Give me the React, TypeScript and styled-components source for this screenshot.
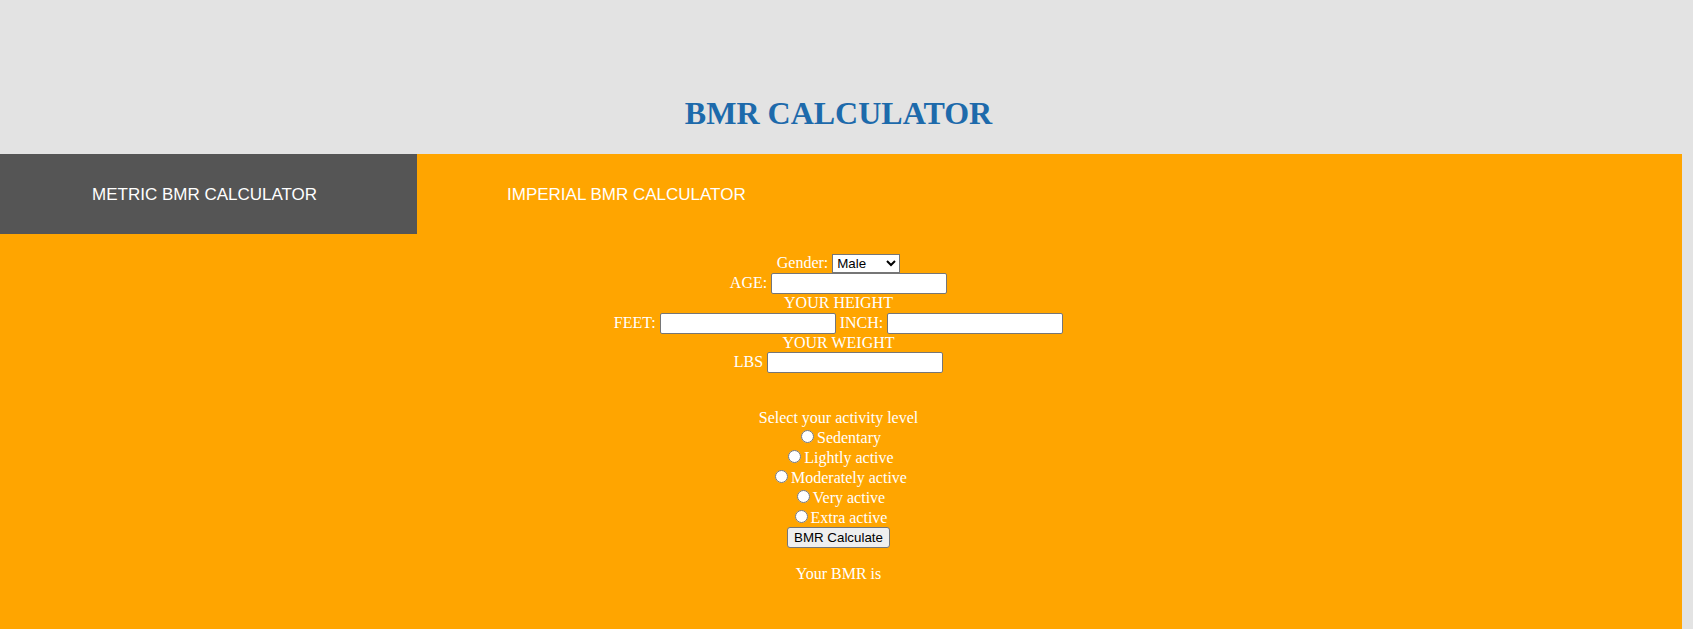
import React from "react";
import styled, { createGlobalStyle } from "styled-components";

const GlobalStyle = createGlobalStyle`
  html, body {
    margin: 0;
    padding: 0;
    background: #e3e3e3;
  }
  body {
    font-family: "Liberation Serif", "Times New Roman", serif;
    font-size: 16px;
  }
`;

const Header = styled.header`
  padding: 95px 16px 22px 0;
  text-align: center;
`;

const Title = styled.h1`
  margin: 0;
  font-family: "Liberation Serif", "Times New Roman", serif;
  font-size: 32px;
  line-height: 37px;
  font-weight: bold;
  color: #1d6aab;
`;

const Panel = styled.main`
  width: 1682px;
  min-height: 475px;
  background: #ffa500;
`;

const TabBar = styled.nav`
  display: flex;
`;

const Tab = styled.div<{ $active?: boolean; $indent: number }>`
  width: 417px;
  height: 80px;
  box-sizing: border-box;
  padding: 31px 0 0 ${(p) => p.$indent}px;
  background: ${(p) => (p.$active ? "#555555" : "transparent")};
  color: #ffffff;
  font-family: "Liberation Sans", Arial, sans-serif;
  font-size: 17px;
  line-height: 20px;
  cursor: pointer;
`;

const Form = styled.form`
  padding: 19.5px 5px 40px 0;
  text-align: center;
  color: #ffffff;
  font-family: "Liberation Serif", "Times New Roman", serif;
  font-size: 16px;
  line-height: 18.4px;
`;

const Row = styled.div<{ $h?: number; $gap?: number }>`
  height: ${(p) => (p.$h ? `${p.$h}px` : "auto")};
  margin-top: ${(p) => p.$gap ?? 0}px;
`;

const Select = styled.select`
  width: 68px;
  height: 19px;
  box-sizing: border-box;
  font-family: "Liberation Sans", Arial, sans-serif;
  font-size: 13.33px;
  color: #000;
  background: #fff;
  border: 1px solid #767676;
  border-radius: 0;
`;

const TextInput = styled.input`
  width: 176px;
  height: 21px;
  box-sizing: border-box;
  padding: 1px 2px;
  font-family: "Liberation Sans", Arial, sans-serif;
  font-size: 13.33px;
  background: #fff;
  border: 1px solid #767676;
  border-radius: 2px;
`;

const Radio = styled.input`
  margin: 3px 3px 0 5px;
  width: 13px;
  height: 13px;
`;

const Button = styled.button`
  height: 21px;
  box-sizing: border-box;
  padding: 1px 6px;
  font-family: "Liberation Sans", Arial, sans-serif;
  font-size: 13.33px;
  color: #000;
  background: #efefef;
  border: 1px solid #767676;
  border-radius: 3px;
`;

const Result = styled.p`
  margin: 16.5px 0 0;
`;

const activities = [
  "Sedentary",
  "Lightly active",
  "Moderately active",
  "Very active",
  "Extra active",
];

export default function App() {
  return (
    <>
      <GlobalStyle />
      <Header>
        <Title>BMR CALCULATOR</Title>
      </Header>
      <Panel>
        <TabBar>
          <Tab $active $indent={92}>METRIC BMR CALCULATOR</Tab>
          <Tab $indent={90}>IMPERIAL BMR CALCULATOR</Tab>
        </TabBar>
        <Form onSubmit={(e) => e.preventDefault()}>
          <Row $h={19.7}>
            Gender:{" "}
            <Select defaultValue="male">
              <option value="male">Male</option>
              <option value="female">Female</option>
            </Select>
          </Row>
          <Row $h={21}>
            AGE: <TextInput type="text" />
          </Row>
          <Row $h={18.4}>YOUR HEIGHT</Row>
          <Row $h={21}>
            FEET: <TextInput type="text" /> INCH: <TextInput type="text" />
          </Row>
          <Row $h={18.4}>YOUR WEIGHT</Row>
          <Row $h={21}>
            LBS <TextInput type="text" />
          </Row>
          <Row $h={18.4} $gap={36}>
            Select your activity level
          </Row>
          {activities.map((a) => (
            <Row key={a} $h={20}>
              <Radio type="radio" name="activity" value={a} />
              {a}
            </Row>
          ))}
          <Row $h={21.6}>
            <Button type="submit">BMR Calculate</Button>
          </Row>
          <Result>Your BMR is</Result>
        </Form>
      </Panel>
    </>
  );
}
